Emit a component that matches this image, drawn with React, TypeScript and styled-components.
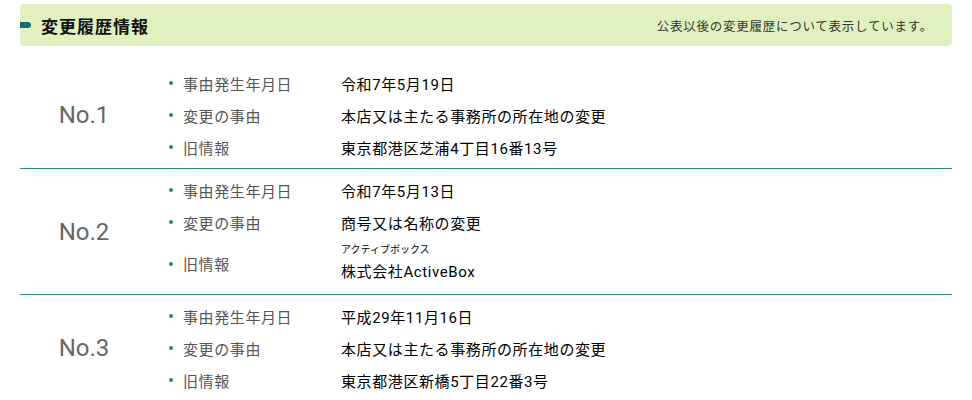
import React from "react";
import styled, { createGlobalStyle } from "styled-components";

const GlobalStyle = createGlobalStyle`
  html, body {
    margin: 0;
    padding: 0;
    background: #ffffff;
  }
  body {
    font-family: "Roboto", "Noto Sans CJK JP", sans-serif;
    color: #111;
  }
  * { box-sizing: border-box; }
`;

const Page = styled.div`
  padding: 4px 20px 0 20px;
  width: 972px;
`;

const Header = styled.div`
  display: flex;
  align-items: center;
  justify-content: space-between;
  height: 42px;
  background: #e0f0be;
  border-radius: 4px;
  padding-right: 19px;
`;

const Title = styled.h2`
  display: flex;
  align-items: center;
  margin: 0;
  font-family: "Noto Sans CJK JP", sans-serif;
  font-size: 17px;
  font-weight: 700;
  letter-spacing: 1px;
  color: #111;
  &::before {
    content: "";
    display: block;
    width: 11px;
    height: 6px;
    background: #1c6a69;
    border-radius: 0 3px 3px 0;
    margin-right: 10px;
  }
`;

const Note = styled.p`
  margin: 0;
  font-family: "Noto Sans CJK JP", sans-serif;
  font-size: 12.5px;
  letter-spacing: 0.75px;
  color: #333;
`;

const List = styled.div`
  margin-top: 16px;
`;

const Row = styled.section`
  display: grid;
  grid-template-columns: 128px 1fr;
  padding: 5px 0;
  border-bottom: 1px solid #2b8a72;
`;

const Number = styled.div`
  display: flex;
  align-items: center;
  justify-content: center;
  font-family: "Roboto", sans-serif;
  font-size: 24px;
  color: #666;
`;

const Items = styled.dl`
  display: grid;
  grid-template-columns: 193px 1fr;
  margin: 0;
`;

const Label = styled.dt`
  display: flex;
  align-items: center;
  min-height: 32px;
  padding-left: 21px;
  font-size: 15px;
  letter-spacing: 0.6px;
  color: #555;
  &::before {
    content: "";
    display: block;
    width: 4px;
    height: 4px;
    border-radius: 50%;
    background: #1b8f62;
    margin-right: 10px;
  }
`;

const Value = styled.dd`
  display: flex;
  align-items: center;
  min-height: 32px;
  margin: 0;
  font-size: 15px;
  letter-spacing: 0.6px;
  font-weight: 400;
  color: #000;
`;

const Stack = styled.dd`
  display: flex;
  flex-direction: column;
  margin: 0;
  padding: 5px 0 2px;
  color: #000;
`;

const Ruby = styled.span`
  font-size: 10px;
  line-height: 14px;
`;

const Main = styled.span`
  font-size: 15px;
  line-height: 30px;
  letter-spacing: 0.6px;
  font-weight: 400;
`;

type Entry = {
  no: string;
  date: string;
  reason: string;
  old: string;
  ruby?: string;
};

const entries: Entry[] = [
  {
    no: "No.1",
    date: "令和7年5月19日",
    reason: "本店又は主たる事務所の所在地の変更",
    old: "東京都港区芝浦4丁目16番13号",
  },
  {
    no: "No.2",
    date: "令和7年5月13日",
    reason: "商号又は名称の変更",
    old: "株式会社ActiveBox",
    ruby: "アクティブボックス",
  },
  {
    no: "No.3",
    date: "平成29年11月16日",
    reason: "本店又は主たる事務所の所在地の変更",
    old: "東京都港区新橋5丁目22番3号",
  },
];

export default function App() {
  return (
    <>
      <GlobalStyle />
      <Page>
        <Header>
          <Title>変更履歴情報</Title>
          <Note>公表以後の変更履歴について表示しています。</Note>
        </Header>
        <List>
          {entries.map((e) => (
            <Row key={e.no}>
              <Number>{e.no}</Number>
              <Items>
                <Label>事由発生年月日</Label>
                <Value>{e.date}</Value>
                <Label>変更の事由</Label>
                <Value>{e.reason}</Value>
                <Label>旧情報</Label>
                {e.ruby ? (
                  <Stack>
                    <Ruby>{e.ruby}</Ruby>
                    <Main>{e.old}</Main>
                  </Stack>
                ) : (
                  <Value>{e.old}</Value>
                )}
              </Items>
            </Row>
          ))}
        </List>
      </Page>
    </>
  );
}
